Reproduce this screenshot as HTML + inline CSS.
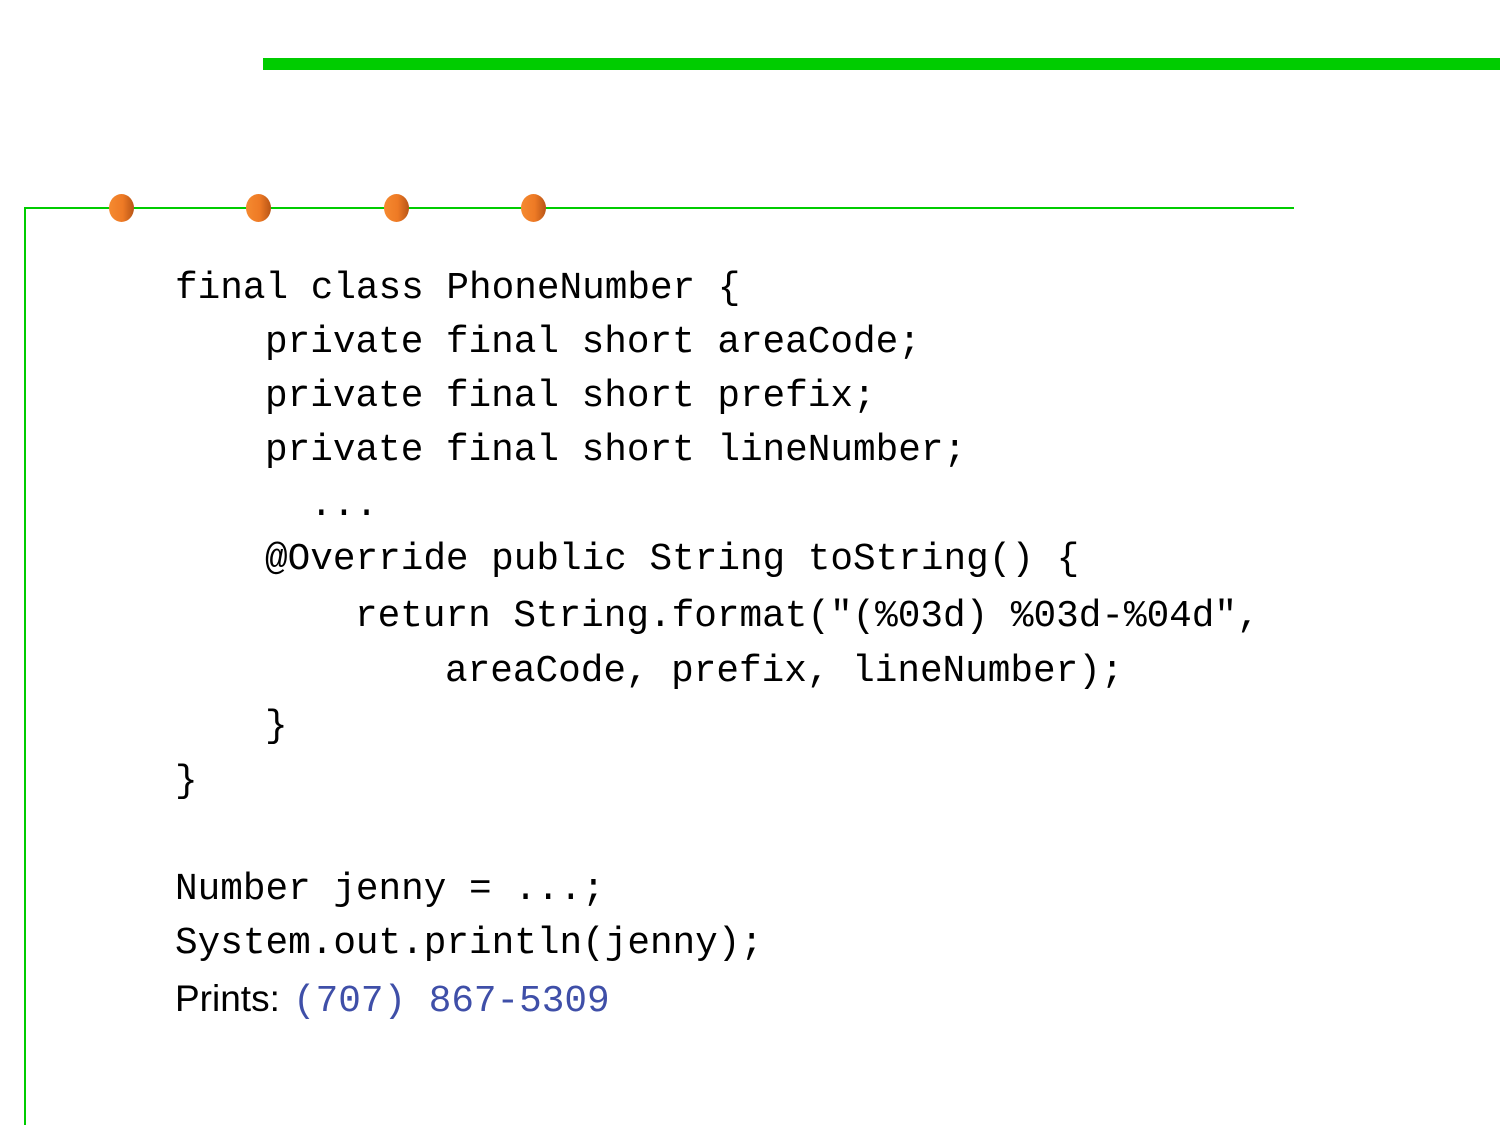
<!DOCTYPE html>
<html><head><meta charset="utf-8"><style>
html,body{margin:0;padding:0;background:#fff;width:1500px;height:1125px;overflow:hidden;position:relative}
.bar{position:absolute;left:263px;top:58px;width:1237px;height:12px;background:#00cc00}
.hl{position:absolute;left:24px;top:207px;width:1270px;height:2px;background:#00cc00}
.vl{position:absolute;left:24px;top:207px;width:2px;height:918px;background:#00cc00}
.dot{position:absolute;top:194px;width:25px;height:28px;border-radius:50%;background:linear-gradient(90deg,#f58a30 0%,#ee7a25 55%,#b85516 100%)}
.l{position:absolute;font-family:"Liberation Mono",monospace;font-size:37.7px;line-height:54px;white-space:pre;color:#000}
.s{position:absolute;font-family:"Liberation Sans",sans-serif;font-size:37px;line-height:54px;color:#000}
.b{color:#3f4fa8}
</style></head><body>
<div class="bar"></div><div class="hl"></div><div class="vl"></div>
<div class="dot" style="left:109px"></div>
<div class="dot" style="left:246px"></div>
<div class="dot" style="left:384px"></div>
<div class="dot" style="left:521px"></div>
<div class="l" style="left:175px;top:262px">final class PhoneNumber {</div>
<div class="l" style="left:265px;top:316px">private final short areaCode;</div>
<div class="l" style="left:265px;top:370px">private final short prefix;</div>
<div class="l" style="left:265px;top:424px">private final short lineNumber;</div>
<div class="l" style="left:310px;top:479px">...</div>
<div class="l" style="left:265px;top:533px">@Override public String toString() {</div>
<div class="l" style="left:355px;top:590px">return String.format("(%03d) %03d-%04d",</div>
<div class="l" style="left:445px;top:645px">areaCode, prefix, lineNumber);</div>
<div class="l" style="left:265px;top:700px">}</div>
<div class="l" style="left:175px;top:755px">}</div>
<div class="l" style="left:175px;top:863px">Number jenny = ...;</div>
<div class="l" style="left:175px;top:917px">System.out.println(jenny);</div>
<div class="s" style="left:175px;top:972px">Prints:</div>
<div class="l b" style="left:293px;top:975px">(707) 867-5309</div>
</body></html>
